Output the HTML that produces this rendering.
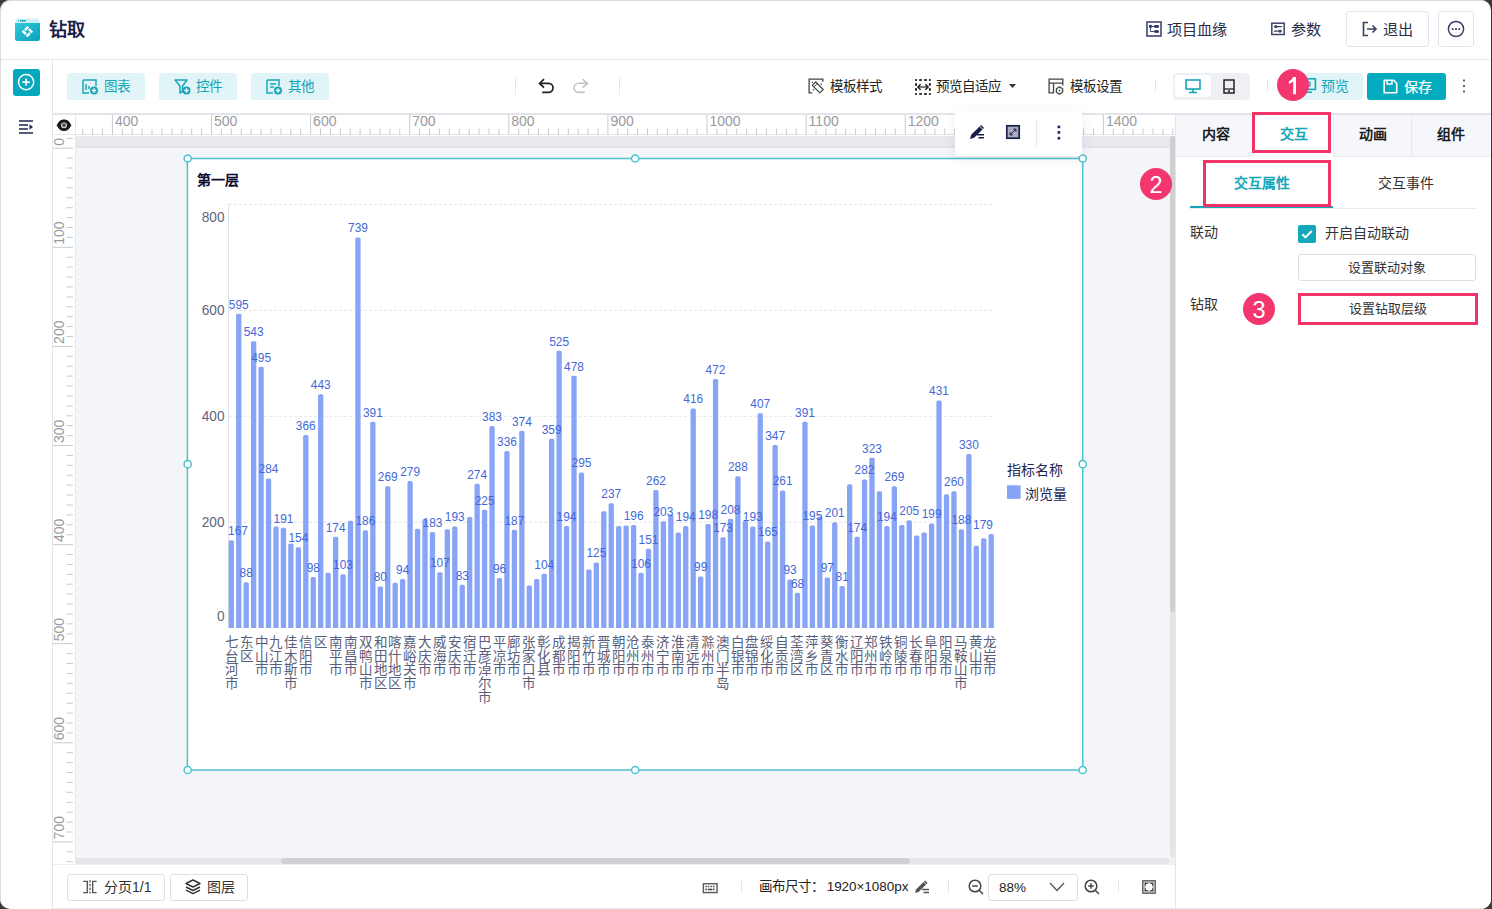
<!DOCTYPE html>
<html lang="zh-CN">
<head>
<meta charset="utf-8">
<style>
*{box-sizing:border-box;margin:0;padding:0}
html,body{width:1492px;height:909px;overflow:hidden;background:#3a3a3a;font-family:"Liberation Sans",sans-serif;color:#333}
.win{position:absolute;left:0;top:0;width:1491px;height:909px;background:#fff;border-radius:10px;overflow:hidden}
.win:after{content:"";position:absolute;left:0;top:0;right:0;bottom:0;border-radius:10px;box-shadow:inset 1px 1px 0 #dcdcdc;pointer-events:none}
.abs{position:absolute}
.hdr{left:0;top:0;width:1491px;height:60px;border-bottom:1px solid #e4e6ee}
.side{left:0;top:60px;width:53px;height:849px;border-right:1px solid #e4e6ee}
.tbtn{position:absolute;top:73px;height:27px;width:78px;background:#e1f4f7;border-radius:3px;color:#10a4b7;font-size:13.5px;line-height:27px}
.tbtn span{position:absolute;left:37px;top:0}
.tbtn svg{position:absolute;left:15px;top:6px}
.tool{position:absolute;top:79px;font-size:13.5px;color:#222;line-height:16px}
.sep{position:absolute;width:1px;background:#e6e7ec}
svg text{font-family:"Liberation Sans",sans-serif}
.yl{font-size:15.5px;fill:#5e6382}
.dl{font-size:12.8px;fill:#4468d8}
.xl{font-size:13.5px;fill:#5a5e7a}
.rl{font-size:14px;fill:#9a9a9e}
.tab{position:absolute;top:113px;height:42px;width:79px;font-size:14px;font-weight:bold;color:#1d1d1d;text-align:center;line-height:42px}
.pink{position:absolute;border:3px solid #f03468}
.badge{position:absolute;width:32px;height:32px;border-radius:50%;background:#f3366e;color:#fff;font-size:23.5px;text-align:center;line-height:34px}
.btn{position:absolute;border:1px solid #dcdfe6;border-radius:3px;background:#fff;font-size:13px;color:#333;text-align:center}
</style>
</head>
<body>
<div class="win">
  <!-- header -->
  <div class="abs hdr">
    <svg class="abs" style="left:15px;top:18px" width="26" height="24" viewBox="0 0 26 24">
      <defs><linearGradient id="lg" x1="0" y1="0" x2="1" y2="1"><stop offset="0" stop-color="#33c8de"/><stop offset="1" stop-color="#0a9fbb"/></linearGradient></defs>
      <rect x="0.5" y="0.5" width="24" height="8" rx="2.5" fill="#cdeff5"/>
      <path d="M0 5.1H25V20.5Q25 23 22.5 23H2.5Q0 23 0 20.5Z" fill="url(#lg)"/>
      <rect x="3" y="2" width="1" height="1.5" fill="#19a9c2"/><rect x="5" y="2" width="6" height="1.5" fill="#19a9c2"/>
      <g fill="#fff" transform="translate(12.4 13.6) rotate(-45)"><rect x="-0.8" y="-4" width="4.8" height="2.4" rx="0.5"/><rect x="1.6" y="-0.8" width="2.4" height="4.8" rx="0.5"/><rect x="-4" y="1.6" width="4.8" height="2.4" rx="0.5"/><rect x="-4" y="-4" width="2.4" height="4.8" rx="0.5"/></g>
    </svg>
    <div class="abs" style="left:49px;top:18.5px;font-size:18px;font-weight:bold;color:#1c1d47;line-height:22px">钻取</div>

    <svg class="abs" style="left:1146px;top:21px" width="16" height="16" viewBox="0 0 16 16"><rect x="1" y="1" width="14" height="14" fill="none" stroke="#4d5275" stroke-width="1.7"/><rect x="3.1" y="3.9" width="2.7" height="2.9" fill="#2a2f5a"/><rect x="8.3" y="4.1" width="4.5" height="2.7" fill="#2a2f5a"/><rect x="8.3" y="9.2" width="4.5" height="2.6" fill="#2a2f5a"/><path d="M5.8 5.4H8.3M4.4 6.8V10.5H8.3" fill="none" stroke="#2a2f5a" stroke-width="0.9"/></svg>
    <div class="abs" style="left:1167px;top:20.5px;font-size:15.2px;color:#2b2d45;line-height:18px">项目血缘</div>
    <svg class="abs" style="left:1271px;top:22px" width="14" height="14" viewBox="0 0 14 14"><rect x="0.8" y="1.2" width="12.4" height="11.3" fill="none" stroke="#3f4466" stroke-width="1.5"/><path d="M2.9 4.6h7.9M2.9 9.1h7.9" stroke="#3f4466" stroke-width="1.3"/><circle cx="4.9" cy="4.6" r="1.6" fill="#3f4466"/><circle cx="9" cy="9.1" r="1.6" fill="#3f4466"/></svg>
    <div class="abs" style="left:1291px;top:20.5px;font-size:15.2px;color:#2b2d45;line-height:18px">参数</div>
    <div class="abs" style="left:1346px;top:11px;width:83px;height:36px;border:1px solid #e2e3ec;border-radius:3px"></div>
    <svg class="abs" style="left:1362px;top:21px" width="16" height="16" viewBox="0 0 16 16"><path d="M6 1.5H1.5v13H6" fill="none" stroke="#3f4363" stroke-width="1.7"/><path d="M5 8h9M10.5 4.5L14 8l-3.5 3.5" fill="none" stroke="#3f4363" stroke-width="1.7"/></svg>
    <div class="abs" style="left:1383px;top:20.5px;font-size:15.2px;color:#2b2d45;line-height:18px">退出</div>
    <div class="abs" style="left:1438px;top:11px;width:36px;height:36px;border:1px solid #e2e3ec;border-radius:3px"></div>
    <svg class="abs" style="left:1447px;top:20px" width="18" height="18" viewBox="0 0 18 18"><circle cx="9" cy="9" r="7.6" fill="none" stroke="#3f4363" stroke-width="1.5"/><rect x="4.8" y="8.2" width="1.8" height="1.8" fill="#3f4363"/><rect x="8.1" y="8.2" width="1.8" height="1.8" fill="#3f4363"/><rect x="11.4" y="8.2" width="1.8" height="1.8" fill="#3f4363"/></svg>
  </div>

  <!-- left sidebar -->
  <div class="abs side"></div>
  <div class="abs" style="left:13px;top:69px;width:27px;height:27px;background:#08a8bc;border-radius:3px"></div>
  <svg class="abs" style="left:13px;top:69px" width="27" height="27" viewBox="0 0 27 27"><circle cx="13.1" cy="13.1" r="7.6" fill="none" stroke="#fff" stroke-width="1.5"/><path d="M13.1 9.4v7.4M9.4 13.1h7.4" stroke="#fff" stroke-width="1.6"/></svg>
  <svg class="abs" style="left:19px;top:120px" width="15" height="14" viewBox="0 0 15 14"><path d="M0 1h14M0 5h9M0 9h9M0 13h14" stroke="#22264f" stroke-width="1.4"/><path d="M10.5 4.2l3.5 2.8l-3.5 2.8z" fill="#22264f"/></svg>

  <!-- toolbar -->
  <div class="tbtn" style="left:67px"><svg width="17" height="16" viewBox="0 0 17 16"><path d="M1 1h13v6M1 1v13h6" fill="none" stroke="#17a6b8" stroke-width="1.5"/><path d="M4 5v6M7 7v3" stroke="#17a6b8" stroke-width="1.5"/><circle cx="12" cy="11.5" r="4" fill="#17a6b8"/><path d="M12 9.3v4.4M9.8 11.5h4.4" stroke="#fff" stroke-width="1.3"/></svg><span>图表</span></div>
  <div class="tbtn" style="left:159px"><svg width="17" height="16" viewBox="0 0 17 16"><path d="M1 1h12l-4.5 6v5.5L6 14V7z" fill="none" stroke="#17a6b8" stroke-width="1.5" stroke-linejoin="round"/><circle cx="12.5" cy="11.5" r="4" fill="#17a6b8"/><path d="M12.5 9.3v4.4M10.3 11.5h4.4" stroke="#fff" stroke-width="1.3"/></svg><span>控件</span></div>
  <div class="tbtn" style="left:251px"><svg width="17" height="16" viewBox="0 0 17 16"><path d="M1 1h12v6M1 1v13h6M4 5h6M4 8h4" fill="none" stroke="#17a6b8" stroke-width="1.5"/><circle cx="12" cy="11.5" r="4" fill="#17a6b8"/><path d="M12 9.3v4.4M9.8 11.5h4.4" stroke="#fff" stroke-width="1.3"/></svg><span>其他</span></div>

  <div class="sep" style="left:515px;top:77px;height:18px"></div>
  <svg class="abs" style="left:536px;top:75px" width="20" height="20" viewBox="0 0 20 20"><path d="M8 4.2L3.6 8.4L8 12.6" fill="none" stroke="#222" stroke-width="1.7"/><path d="M3.8 8.3H12.5A4.55 4.55 0 0 1 12.5 17.4H6.2" fill="none" stroke="#222" stroke-width="1.7"/></svg>
  <svg class="abs" style="left:571px;top:75px" width="20" height="20" viewBox="0 0 20 20"><path d="M11.6 4.2L16.4 8.4L11.6 12.6" fill="none" stroke="#c4c4c4" stroke-width="1.6"/><path d="M16.2 8.3H7.6A4.55 4.55 0 0 0 7.6 17.4H13.9" fill="none" stroke="#c4c4c4" stroke-width="1.6"/></svg>
  <div class="sep" style="left:619px;top:77px;height:18px"></div>

  <svg class="abs" style="left:805px;top:75px" width="22" height="22" viewBox="0 0 22 22"><path d="M17.8 6.8V4.1H4.1v13.7h3.2" fill="none" stroke="#444" stroke-width="1.3"/><path d="M7.3 10.4L10.7 7L18.2 14.5L14.8 17.9Z" fill="none" stroke="#444" stroke-width="1.2" stroke-linejoin="round"/><path d="M8.9 11.9l3.3-3.3" stroke="#444" stroke-width="1"/><circle cx="7.5" cy="7.4" r="0.7" fill="#444"/><circle cx="16.3" cy="9.1" r="0.8" fill="#444"/><circle cx="8.5" cy="14.8" r="0.8" fill="#444"/></svg>
  <div class="tool" style="left:830px">模板样式</div>
  <svg class="abs" style="left:910px;top:75px" width="26" height="24" viewBox="0 0 26 24"><g fill="#222"><rect x="5.1" y="4.1" width="1.9" height="1.8"/><rect x="9.2" y="4.1" width="2.7" height="1.8"/><rect x="14.1" y="4.1" width="2.8" height="1.8"/><rect x="18.9" y="4.1" width="1.9" height="1.8"/><rect x="5.1" y="18.1" width="1.9" height="1.8"/><rect x="9.2" y="18.1" width="2.7" height="1.8"/><rect x="14.1" y="18.1" width="2.8" height="1.8"/><rect x="18.9" y="18.1" width="1.9" height="1.8"/><rect x="5.1" y="8.1" width="1.9" height="2.7"/><rect x="5.1" y="13.1" width="1.9" height="2.7"/><rect x="18.9" y="8.1" width="1.9" height="2.7"/><rect x="18.9" y="13.1" width="1.9" height="2.7"/></g><path d="M8.5 12h9" stroke="#444" stroke-width="1.4"/><path d="M10.6 9.3L8 12l2.6 2.7M15.4 9.3L18 12l-2.6 2.7" fill="none" stroke="#222" stroke-width="1.6"/></svg>
  <div class="tool" style="left:936px">预览自适应</div>
  <svg class="abs" style="left:1009px;top:84px" width="7" height="5" viewBox="0 0 7 5"><path d="M0 0h7L3.5 4z" fill="#333"/></svg>
  <svg class="abs" style="left:1045px;top:75px" width="22" height="22" viewBox="0 0 22 22"><path d="M17.8 10.5V4.1H4.1v13.7h4.4V8.2M4.1 8.2h13.7" fill="none" stroke="#444" stroke-width="1.3"/><path d="M14.5 11.9L17.6 13.7V17.3L14.5 19.1L11.4 17.3V13.7Z" fill="none" stroke="#444" stroke-width="1.3" stroke-linejoin="round"/><circle cx="14.5" cy="15.5" r="0.9" fill="#444"/></svg>
  <div class="tool" style="left:1070px">模板设置</div>
  <div class="sep" style="left:1155px;top:79px;height:13px"></div>

  <div class="abs" style="left:1173px;top:73px;width:77px;height:27px;background:#eef0f4;border-radius:4px"></div>
  <div class="abs" style="left:1175px;top:75px;width:36px;height:22px;background:#fff;border-radius:3px"></div>
  <svg class="abs" style="left:1185px;top:79px" width="16" height="15" viewBox="0 0 16 15"><rect x="1" y="1" width="14" height="9" fill="none" stroke="#17a6b8" stroke-width="1.6"/><path d="M8 10v3M4 13.5h8" stroke="#17a6b8" stroke-width="1.6"/></svg>
  <svg class="abs" style="left:1223px;top:79px" width="12" height="15" viewBox="0 0 12 15"><rect x="1" y="1" width="10" height="13" fill="none" stroke="#222" stroke-width="1.5"/><path d="M1 10h10" stroke="#222" stroke-width="1.3"/><rect x="5" y="11.3" width="2" height="1.5" fill="#222"/></svg>
  <div class="sep" style="left:1267px;top:79px;height:13px"></div>

  <div class="abs" style="left:1290px;top:73px;width:73px;height:27px;background:#e1f4f7;border-radius:3px"></div>
  <svg class="abs" style="left:1300px;top:77px" width="17" height="17" viewBox="0 0 17 17"><rect x="1.8" y="1.8" width="13.6" height="10.6" fill="none" stroke="#17a6b8" stroke-width="1.6"/><rect x="6.4" y="5.3" width="3.6" height="3.6" fill="none" stroke="#17a6b8" stroke-width="1.3"/><path d="M4 15.2h8" stroke="#17a6b8" stroke-width="1.6"/></svg>
  <div class="abs" style="left:1321px;top:78px;font-size:14px;color:#17a6b8;line-height:16px">预览</div>
  <div class="abs" style="left:1367px;top:73px;width:79px;height:27px;background:#03abbe;border-radius:3px"></div>
  <svg class="abs" style="left:1383px;top:79px" width="15" height="15" viewBox="0 0 15 15"><path d="M1.2 1.2h9.5l3 3v9.5H1.2z" fill="none" stroke="#fff" stroke-width="1.6" stroke-linejoin="round"/><path d="M4 1.5v3.5h5V1.5" fill="none" stroke="#fff" stroke-width="1.5"/></svg>
  <div class="abs" style="left:1404px;top:79px;font-size:14px;font-weight:500;color:#fff;line-height:16px;-webkit-text-stroke:0.25px #fff">保存</div>
  <svg class="abs" style="left:1462px;top:78px" width="4" height="16" viewBox="0 0 4 16"><rect x="1.1" y="1.6" width="1.8" height="1.8" fill="#444"/><rect x="1.1" y="7.1" width="1.8" height="1.8" fill="#444"/><rect x="1.1" y="12.6" width="1.8" height="1.8" fill="#444"/></svg>
  <div class="badge" style="left:1277px;top:69px"><svg width="32" height="32" viewBox="0 0 32 32" style="position:absolute;left:0;top:0"><path d="M16.2 8.1H19V25.2H16.2V12.6Q14.4 14.1 11.9 14.9V12.3Q14.9 11.1 16.2 8.1Z" fill="#fff"/></svg></div>

  <!-- ruler + canvas area -->
  <div class="abs" style="left:53px;top:113px;width:1438px;height:2px;background:#e3e4ea"></div>
  <div class="abs" style="left:53px;top:115px;width:1122px;height:20px;background:#fff;border-bottom:1px solid #e6e7ec"></div>
  <div class="abs" style="left:53px;top:135px;width:23px;height:728px;background:#fff;border-right:1px solid #e6e7ec"></div>
  <div class="abs" style="left:75px;top:115px;width:1px;height:20px;background:#e6e7ec"></div>
  <div class="abs" style="left:76px;top:136px;width:1094px;height:722px;background:#f4f5f9"></div>
  <div class="abs" style="left:76px;top:136px;width:1094px;height:12px;background:linear-gradient(#e9eaee,#e9eaee 70%,#e2e3e7)"></div>
  <div class="abs" style="left:75px;top:136px;width:1px;height:1px"></div>
  <svg class="abs" style="left:56px;top:118.5px" width="16" height="13" viewBox="0 0 16 13"><path d="M0.8 6.3C3 1.4 5.5 0.6 8 0.6S13 1.4 15.2 6.3C13 11.2 10.5 12 8 12S3 11.2 0.8 6.3z" fill="#1a1a1a"/><circle cx="8" cy="6.3" r="2.9" fill="#fff"/><circle cx="8" cy="6.3" r="2.1" fill="#1a1a1a"/><circle cx="8" cy="6.3" r="1.6" fill="#bbb"/><circle cx="8" cy="6.3" r="1.0" fill="#1a1a1a"/></svg>
  <svg class="abs" style="left:0;top:0" width="1492" height="909"><line x1="82.7" y1="128.5" x2="82.7" y2="135" stroke="#c9cacf" stroke-width="1"/>
<line x1="92.6" y1="128.5" x2="92.6" y2="135" stroke="#c9cacf" stroke-width="1"/>
<line x1="102.5" y1="128.5" x2="102.5" y2="135" stroke="#c9cacf" stroke-width="1"/>
<line x1="112.4" y1="115" x2="112.4" y2="135" stroke="#c9cacf" stroke-width="1"/>
<text x="114.9" y="126" class="rl">400</text>
<line x1="122.3" y1="128.5" x2="122.3" y2="135" stroke="#c9cacf" stroke-width="1"/>
<line x1="132.2" y1="128.5" x2="132.2" y2="135" stroke="#c9cacf" stroke-width="1"/>
<line x1="142.1" y1="128.5" x2="142.1" y2="135" stroke="#c9cacf" stroke-width="1"/>
<line x1="152.0" y1="128.5" x2="152.0" y2="135" stroke="#c9cacf" stroke-width="1"/>
<line x1="161.9" y1="128.5" x2="161.9" y2="135" stroke="#c9cacf" stroke-width="1"/>
<line x1="171.9" y1="128.5" x2="171.9" y2="135" stroke="#c9cacf" stroke-width="1"/>
<line x1="181.8" y1="128.5" x2="181.8" y2="135" stroke="#c9cacf" stroke-width="1"/>
<line x1="191.7" y1="128.5" x2="191.7" y2="135" stroke="#c9cacf" stroke-width="1"/>
<line x1="201.6" y1="128.5" x2="201.6" y2="135" stroke="#c9cacf" stroke-width="1"/>
<line x1="211.5" y1="115" x2="211.5" y2="135" stroke="#c9cacf" stroke-width="1"/>
<text x="214.0" y="126" class="rl">500</text>
<line x1="221.4" y1="128.5" x2="221.4" y2="135" stroke="#c9cacf" stroke-width="1"/>
<line x1="231.3" y1="128.5" x2="231.3" y2="135" stroke="#c9cacf" stroke-width="1"/>
<line x1="241.2" y1="128.5" x2="241.2" y2="135" stroke="#c9cacf" stroke-width="1"/>
<line x1="251.1" y1="128.5" x2="251.1" y2="135" stroke="#c9cacf" stroke-width="1"/>
<line x1="261.1" y1="128.5" x2="261.1" y2="135" stroke="#c9cacf" stroke-width="1"/>
<line x1="271.0" y1="128.5" x2="271.0" y2="135" stroke="#c9cacf" stroke-width="1"/>
<line x1="280.9" y1="128.5" x2="280.9" y2="135" stroke="#c9cacf" stroke-width="1"/>
<line x1="290.8" y1="128.5" x2="290.8" y2="135" stroke="#c9cacf" stroke-width="1"/>
<line x1="300.7" y1="128.5" x2="300.7" y2="135" stroke="#c9cacf" stroke-width="1"/>
<line x1="310.6" y1="115" x2="310.6" y2="135" stroke="#c9cacf" stroke-width="1"/>
<text x="313.1" y="126" class="rl">600</text>
<line x1="320.5" y1="128.5" x2="320.5" y2="135" stroke="#c9cacf" stroke-width="1"/>
<line x1="330.4" y1="128.5" x2="330.4" y2="135" stroke="#c9cacf" stroke-width="1"/>
<line x1="340.3" y1="128.5" x2="340.3" y2="135" stroke="#c9cacf" stroke-width="1"/>
<line x1="350.2" y1="128.5" x2="350.2" y2="135" stroke="#c9cacf" stroke-width="1"/>
<line x1="360.1" y1="128.5" x2="360.1" y2="135" stroke="#c9cacf" stroke-width="1"/>
<line x1="370.1" y1="128.5" x2="370.1" y2="135" stroke="#c9cacf" stroke-width="1"/>
<line x1="380.0" y1="128.5" x2="380.0" y2="135" stroke="#c9cacf" stroke-width="1"/>
<line x1="389.9" y1="128.5" x2="389.9" y2="135" stroke="#c9cacf" stroke-width="1"/>
<line x1="399.8" y1="128.5" x2="399.8" y2="135" stroke="#c9cacf" stroke-width="1"/>
<line x1="409.7" y1="115" x2="409.7" y2="135" stroke="#c9cacf" stroke-width="1"/>
<text x="412.2" y="126" class="rl">700</text>
<line x1="419.6" y1="128.5" x2="419.6" y2="135" stroke="#c9cacf" stroke-width="1"/>
<line x1="429.5" y1="128.5" x2="429.5" y2="135" stroke="#c9cacf" stroke-width="1"/>
<line x1="439.4" y1="128.5" x2="439.4" y2="135" stroke="#c9cacf" stroke-width="1"/>
<line x1="449.3" y1="128.5" x2="449.3" y2="135" stroke="#c9cacf" stroke-width="1"/>
<line x1="459.2" y1="128.5" x2="459.2" y2="135" stroke="#c9cacf" stroke-width="1"/>
<line x1="469.2" y1="128.5" x2="469.2" y2="135" stroke="#c9cacf" stroke-width="1"/>
<line x1="479.1" y1="128.5" x2="479.1" y2="135" stroke="#c9cacf" stroke-width="1"/>
<line x1="489.0" y1="128.5" x2="489.0" y2="135" stroke="#c9cacf" stroke-width="1"/>
<line x1="498.9" y1="128.5" x2="498.9" y2="135" stroke="#c9cacf" stroke-width="1"/>
<line x1="508.8" y1="115" x2="508.8" y2="135" stroke="#c9cacf" stroke-width="1"/>
<text x="511.3" y="126" class="rl">800</text>
<line x1="518.7" y1="128.5" x2="518.7" y2="135" stroke="#c9cacf" stroke-width="1"/>
<line x1="528.6" y1="128.5" x2="528.6" y2="135" stroke="#c9cacf" stroke-width="1"/>
<line x1="538.5" y1="128.5" x2="538.5" y2="135" stroke="#c9cacf" stroke-width="1"/>
<line x1="548.4" y1="128.5" x2="548.4" y2="135" stroke="#c9cacf" stroke-width="1"/>
<line x1="558.4" y1="128.5" x2="558.4" y2="135" stroke="#c9cacf" stroke-width="1"/>
<line x1="568.3" y1="128.5" x2="568.3" y2="135" stroke="#c9cacf" stroke-width="1"/>
<line x1="578.2" y1="128.5" x2="578.2" y2="135" stroke="#c9cacf" stroke-width="1"/>
<line x1="588.1" y1="128.5" x2="588.1" y2="135" stroke="#c9cacf" stroke-width="1"/>
<line x1="598.0" y1="128.5" x2="598.0" y2="135" stroke="#c9cacf" stroke-width="1"/>
<line x1="607.9" y1="115" x2="607.9" y2="135" stroke="#c9cacf" stroke-width="1"/>
<text x="610.4" y="126" class="rl">900</text>
<line x1="617.8" y1="128.5" x2="617.8" y2="135" stroke="#c9cacf" stroke-width="1"/>
<line x1="627.7" y1="128.5" x2="627.7" y2="135" stroke="#c9cacf" stroke-width="1"/>
<line x1="637.6" y1="128.5" x2="637.6" y2="135" stroke="#c9cacf" stroke-width="1"/>
<line x1="647.5" y1="128.5" x2="647.5" y2="135" stroke="#c9cacf" stroke-width="1"/>
<line x1="657.4" y1="128.5" x2="657.4" y2="135" stroke="#c9cacf" stroke-width="1"/>
<line x1="667.4" y1="128.5" x2="667.4" y2="135" stroke="#c9cacf" stroke-width="1"/>
<line x1="677.3" y1="128.5" x2="677.3" y2="135" stroke="#c9cacf" stroke-width="1"/>
<line x1="687.2" y1="128.5" x2="687.2" y2="135" stroke="#c9cacf" stroke-width="1"/>
<line x1="697.1" y1="128.5" x2="697.1" y2="135" stroke="#c9cacf" stroke-width="1"/>
<line x1="707.0" y1="115" x2="707.0" y2="135" stroke="#c9cacf" stroke-width="1"/>
<text x="709.5" y="126" class="rl">1000</text>
<line x1="716.9" y1="128.5" x2="716.9" y2="135" stroke="#c9cacf" stroke-width="1"/>
<line x1="726.8" y1="128.5" x2="726.8" y2="135" stroke="#c9cacf" stroke-width="1"/>
<line x1="736.7" y1="128.5" x2="736.7" y2="135" stroke="#c9cacf" stroke-width="1"/>
<line x1="746.6" y1="128.5" x2="746.6" y2="135" stroke="#c9cacf" stroke-width="1"/>
<line x1="756.5" y1="128.5" x2="756.5" y2="135" stroke="#c9cacf" stroke-width="1"/>
<line x1="766.5" y1="128.5" x2="766.5" y2="135" stroke="#c9cacf" stroke-width="1"/>
<line x1="776.4" y1="128.5" x2="776.4" y2="135" stroke="#c9cacf" stroke-width="1"/>
<line x1="786.3" y1="128.5" x2="786.3" y2="135" stroke="#c9cacf" stroke-width="1"/>
<line x1="796.2" y1="128.5" x2="796.2" y2="135" stroke="#c9cacf" stroke-width="1"/>
<line x1="806.1" y1="115" x2="806.1" y2="135" stroke="#c9cacf" stroke-width="1"/>
<text x="808.6" y="126" class="rl">1100</text>
<line x1="816.0" y1="128.5" x2="816.0" y2="135" stroke="#c9cacf" stroke-width="1"/>
<line x1="825.9" y1="128.5" x2="825.9" y2="135" stroke="#c9cacf" stroke-width="1"/>
<line x1="835.8" y1="128.5" x2="835.8" y2="135" stroke="#c9cacf" stroke-width="1"/>
<line x1="845.7" y1="128.5" x2="845.7" y2="135" stroke="#c9cacf" stroke-width="1"/>
<line x1="855.6" y1="128.5" x2="855.6" y2="135" stroke="#c9cacf" stroke-width="1"/>
<line x1="865.6" y1="128.5" x2="865.6" y2="135" stroke="#c9cacf" stroke-width="1"/>
<line x1="875.5" y1="128.5" x2="875.5" y2="135" stroke="#c9cacf" stroke-width="1"/>
<line x1="885.4" y1="128.5" x2="885.4" y2="135" stroke="#c9cacf" stroke-width="1"/>
<line x1="895.3" y1="128.5" x2="895.3" y2="135" stroke="#c9cacf" stroke-width="1"/>
<line x1="905.2" y1="115" x2="905.2" y2="135" stroke="#c9cacf" stroke-width="1"/>
<text x="907.7" y="126" class="rl">1200</text>
<line x1="915.1" y1="128.5" x2="915.1" y2="135" stroke="#c9cacf" stroke-width="1"/>
<line x1="925.0" y1="128.5" x2="925.0" y2="135" stroke="#c9cacf" stroke-width="1"/>
<line x1="934.9" y1="128.5" x2="934.9" y2="135" stroke="#c9cacf" stroke-width="1"/>
<line x1="944.8" y1="128.5" x2="944.8" y2="135" stroke="#c9cacf" stroke-width="1"/>
<line x1="954.8" y1="128.5" x2="954.8" y2="135" stroke="#c9cacf" stroke-width="1"/>
<line x1="964.7" y1="128.5" x2="964.7" y2="135" stroke="#c9cacf" stroke-width="1"/>
<line x1="974.6" y1="128.5" x2="974.6" y2="135" stroke="#c9cacf" stroke-width="1"/>
<line x1="984.5" y1="128.5" x2="984.5" y2="135" stroke="#c9cacf" stroke-width="1"/>
<line x1="994.4" y1="128.5" x2="994.4" y2="135" stroke="#c9cacf" stroke-width="1"/>
<line x1="1004.3" y1="115" x2="1004.3" y2="135" stroke="#c9cacf" stroke-width="1"/>
<text x="1006.8" y="126" class="rl">1300</text>
<line x1="1014.2" y1="128.5" x2="1014.2" y2="135" stroke="#c9cacf" stroke-width="1"/>
<line x1="1024.1" y1="128.5" x2="1024.1" y2="135" stroke="#c9cacf" stroke-width="1"/>
<line x1="1034.0" y1="128.5" x2="1034.0" y2="135" stroke="#c9cacf" stroke-width="1"/>
<line x1="1043.9" y1="128.5" x2="1043.9" y2="135" stroke="#c9cacf" stroke-width="1"/>
<line x1="1053.9" y1="128.5" x2="1053.9" y2="135" stroke="#c9cacf" stroke-width="1"/>
<line x1="1063.8" y1="128.5" x2="1063.8" y2="135" stroke="#c9cacf" stroke-width="1"/>
<line x1="1073.7" y1="128.5" x2="1073.7" y2="135" stroke="#c9cacf" stroke-width="1"/>
<line x1="1083.6" y1="128.5" x2="1083.6" y2="135" stroke="#c9cacf" stroke-width="1"/>
<line x1="1093.5" y1="128.5" x2="1093.5" y2="135" stroke="#c9cacf" stroke-width="1"/>
<line x1="1103.4" y1="115" x2="1103.4" y2="135" stroke="#c9cacf" stroke-width="1"/>
<text x="1105.9" y="126" class="rl">1400</text>
<line x1="1113.3" y1="128.5" x2="1113.3" y2="135" stroke="#c9cacf" stroke-width="1"/>
<line x1="1123.2" y1="128.5" x2="1123.2" y2="135" stroke="#c9cacf" stroke-width="1"/>
<line x1="1133.1" y1="128.5" x2="1133.1" y2="135" stroke="#c9cacf" stroke-width="1"/>
<line x1="1143.0" y1="128.5" x2="1143.0" y2="135" stroke="#c9cacf" stroke-width="1"/>
<line x1="1153.0" y1="128.5" x2="1153.0" y2="135" stroke="#c9cacf" stroke-width="1"/>
<line x1="1162.9" y1="128.5" x2="1162.9" y2="135" stroke="#c9cacf" stroke-width="1"/>
<line x1="1172.8" y1="128.5" x2="1172.8" y2="135" stroke="#c9cacf" stroke-width="1"/>
<line x1="66.5" y1="138.3" x2="73" y2="138.3" stroke="#c9cacf" stroke-width="1"/>
<line x1="53" y1="148.2" x2="73" y2="148.2" stroke="#c9cacf" stroke-width="1"/>
<text transform="translate(63.5 145.7) rotate(-90)" class="rl">0</text>
<line x1="66.5" y1="158.1" x2="73" y2="158.1" stroke="#c9cacf" stroke-width="1"/>
<line x1="66.5" y1="168.0" x2="73" y2="168.0" stroke="#c9cacf" stroke-width="1"/>
<line x1="66.5" y1="177.9" x2="73" y2="177.9" stroke="#c9cacf" stroke-width="1"/>
<line x1="66.5" y1="187.8" x2="73" y2="187.8" stroke="#c9cacf" stroke-width="1"/>
<line x1="66.5" y1="197.8" x2="73" y2="197.8" stroke="#c9cacf" stroke-width="1"/>
<line x1="66.5" y1="207.7" x2="73" y2="207.7" stroke="#c9cacf" stroke-width="1"/>
<line x1="66.5" y1="217.6" x2="73" y2="217.6" stroke="#c9cacf" stroke-width="1"/>
<line x1="66.5" y1="227.5" x2="73" y2="227.5" stroke="#c9cacf" stroke-width="1"/>
<line x1="66.5" y1="237.4" x2="73" y2="237.4" stroke="#c9cacf" stroke-width="1"/>
<line x1="53" y1="247.3" x2="73" y2="247.3" stroke="#c9cacf" stroke-width="1"/>
<text transform="translate(63.5 244.8) rotate(-90)" class="rl">100</text>
<line x1="66.5" y1="257.2" x2="73" y2="257.2" stroke="#c9cacf" stroke-width="1"/>
<line x1="66.5" y1="267.1" x2="73" y2="267.1" stroke="#c9cacf" stroke-width="1"/>
<line x1="66.5" y1="277.0" x2="73" y2="277.0" stroke="#c9cacf" stroke-width="1"/>
<line x1="66.5" y1="286.9" x2="73" y2="286.9" stroke="#c9cacf" stroke-width="1"/>
<line x1="66.5" y1="296.9" x2="73" y2="296.9" stroke="#c9cacf" stroke-width="1"/>
<line x1="66.5" y1="306.8" x2="73" y2="306.8" stroke="#c9cacf" stroke-width="1"/>
<line x1="66.5" y1="316.7" x2="73" y2="316.7" stroke="#c9cacf" stroke-width="1"/>
<line x1="66.5" y1="326.6" x2="73" y2="326.6" stroke="#c9cacf" stroke-width="1"/>
<line x1="66.5" y1="336.5" x2="73" y2="336.5" stroke="#c9cacf" stroke-width="1"/>
<line x1="53" y1="346.4" x2="73" y2="346.4" stroke="#c9cacf" stroke-width="1"/>
<text transform="translate(63.5 343.9) rotate(-90)" class="rl">200</text>
<line x1="66.5" y1="356.3" x2="73" y2="356.3" stroke="#c9cacf" stroke-width="1"/>
<line x1="66.5" y1="366.2" x2="73" y2="366.2" stroke="#c9cacf" stroke-width="1"/>
<line x1="66.5" y1="376.1" x2="73" y2="376.1" stroke="#c9cacf" stroke-width="1"/>
<line x1="66.5" y1="386.0" x2="73" y2="386.0" stroke="#c9cacf" stroke-width="1"/>
<line x1="66.5" y1="395.9" x2="73" y2="395.9" stroke="#c9cacf" stroke-width="1"/>
<line x1="66.5" y1="405.9" x2="73" y2="405.9" stroke="#c9cacf" stroke-width="1"/>
<line x1="66.5" y1="415.8" x2="73" y2="415.8" stroke="#c9cacf" stroke-width="1"/>
<line x1="66.5" y1="425.7" x2="73" y2="425.7" stroke="#c9cacf" stroke-width="1"/>
<line x1="66.5" y1="435.6" x2="73" y2="435.6" stroke="#c9cacf" stroke-width="1"/>
<line x1="53" y1="445.5" x2="73" y2="445.5" stroke="#c9cacf" stroke-width="1"/>
<text transform="translate(63.5 443.0) rotate(-90)" class="rl">300</text>
<line x1="66.5" y1="455.4" x2="73" y2="455.4" stroke="#c9cacf" stroke-width="1"/>
<line x1="66.5" y1="465.3" x2="73" y2="465.3" stroke="#c9cacf" stroke-width="1"/>
<line x1="66.5" y1="475.2" x2="73" y2="475.2" stroke="#c9cacf" stroke-width="1"/>
<line x1="66.5" y1="485.1" x2="73" y2="485.1" stroke="#c9cacf" stroke-width="1"/>
<line x1="66.5" y1="495.1" x2="73" y2="495.1" stroke="#c9cacf" stroke-width="1"/>
<line x1="66.5" y1="505.0" x2="73" y2="505.0" stroke="#c9cacf" stroke-width="1"/>
<line x1="66.5" y1="514.9" x2="73" y2="514.9" stroke="#c9cacf" stroke-width="1"/>
<line x1="66.5" y1="524.8" x2="73" y2="524.8" stroke="#c9cacf" stroke-width="1"/>
<line x1="66.5" y1="534.7" x2="73" y2="534.7" stroke="#c9cacf" stroke-width="1"/>
<line x1="53" y1="544.6" x2="73" y2="544.6" stroke="#c9cacf" stroke-width="1"/>
<text transform="translate(63.5 542.1) rotate(-90)" class="rl">400</text>
<line x1="66.5" y1="554.5" x2="73" y2="554.5" stroke="#c9cacf" stroke-width="1"/>
<line x1="66.5" y1="564.4" x2="73" y2="564.4" stroke="#c9cacf" stroke-width="1"/>
<line x1="66.5" y1="574.3" x2="73" y2="574.3" stroke="#c9cacf" stroke-width="1"/>
<line x1="66.5" y1="584.2" x2="73" y2="584.2" stroke="#c9cacf" stroke-width="1"/>
<line x1="66.5" y1="594.1" x2="73" y2="594.1" stroke="#c9cacf" stroke-width="1"/>
<line x1="66.5" y1="604.1" x2="73" y2="604.1" stroke="#c9cacf" stroke-width="1"/>
<line x1="66.5" y1="614.0" x2="73" y2="614.0" stroke="#c9cacf" stroke-width="1"/>
<line x1="66.5" y1="623.9" x2="73" y2="623.9" stroke="#c9cacf" stroke-width="1"/>
<line x1="66.5" y1="633.8" x2="73" y2="633.8" stroke="#c9cacf" stroke-width="1"/>
<line x1="53" y1="643.7" x2="73" y2="643.7" stroke="#c9cacf" stroke-width="1"/>
<text transform="translate(63.5 641.2) rotate(-90)" class="rl">500</text>
<line x1="66.5" y1="653.6" x2="73" y2="653.6" stroke="#c9cacf" stroke-width="1"/>
<line x1="66.5" y1="663.5" x2="73" y2="663.5" stroke="#c9cacf" stroke-width="1"/>
<line x1="66.5" y1="673.4" x2="73" y2="673.4" stroke="#c9cacf" stroke-width="1"/>
<line x1="66.5" y1="683.3" x2="73" y2="683.3" stroke="#c9cacf" stroke-width="1"/>
<line x1="66.5" y1="693.2" x2="73" y2="693.2" stroke="#c9cacf" stroke-width="1"/>
<line x1="66.5" y1="703.2" x2="73" y2="703.2" stroke="#c9cacf" stroke-width="1"/>
<line x1="66.5" y1="713.1" x2="73" y2="713.1" stroke="#c9cacf" stroke-width="1"/>
<line x1="66.5" y1="723.0" x2="73" y2="723.0" stroke="#c9cacf" stroke-width="1"/>
<line x1="66.5" y1="732.9" x2="73" y2="732.9" stroke="#c9cacf" stroke-width="1"/>
<line x1="53" y1="742.8" x2="73" y2="742.8" stroke="#c9cacf" stroke-width="1"/>
<text transform="translate(63.5 740.3) rotate(-90)" class="rl">600</text>
<line x1="66.5" y1="752.7" x2="73" y2="752.7" stroke="#c9cacf" stroke-width="1"/>
<line x1="66.5" y1="762.6" x2="73" y2="762.6" stroke="#c9cacf" stroke-width="1"/>
<line x1="66.5" y1="772.5" x2="73" y2="772.5" stroke="#c9cacf" stroke-width="1"/>
<line x1="66.5" y1="782.4" x2="73" y2="782.4" stroke="#c9cacf" stroke-width="1"/>
<line x1="66.5" y1="792.3" x2="73" y2="792.3" stroke="#c9cacf" stroke-width="1"/>
<line x1="66.5" y1="802.3" x2="73" y2="802.3" stroke="#c9cacf" stroke-width="1"/>
<line x1="66.5" y1="812.2" x2="73" y2="812.2" stroke="#c9cacf" stroke-width="1"/>
<line x1="66.5" y1="822.1" x2="73" y2="822.1" stroke="#c9cacf" stroke-width="1"/>
<line x1="66.5" y1="832.0" x2="73" y2="832.0" stroke="#c9cacf" stroke-width="1"/>
<line x1="53" y1="841.9" x2="73" y2="841.9" stroke="#c9cacf" stroke-width="1"/>
<text transform="translate(63.5 839.4) rotate(-90)" class="rl">700</text>
<line x1="66.5" y1="851.8" x2="73" y2="851.8" stroke="#c9cacf" stroke-width="1"/>
<line x1="66.5" y1="861.7" x2="73" y2="861.7" stroke="#c9cacf" stroke-width="1"/></svg>

  <!-- component box -->
  <div class="abs" style="left:188px;top:158px;width:895px;height:612px;background:#fff"></div>
  <svg class="abs" style="left:0;top:0" width="1492" height="909">
<line x1="229" y1="522.2" x2="995" y2="522.2" stroke="#e3e4ea" stroke-width="1" stroke-dasharray="3 2"/>
<line x1="229" y1="416.3" x2="995" y2="416.3" stroke="#e3e4ea" stroke-width="1" stroke-dasharray="3 2"/>
<line x1="229" y1="310.4" x2="995" y2="310.4" stroke="#e3e4ea" stroke-width="1" stroke-dasharray="3 2"/>
<line x1="229" y1="204.4" x2="995" y2="204.4" stroke="#e3e4ea" stroke-width="1" stroke-dasharray="3 2"/>
<line x1="228.5" y1="204" x2="228.5" y2="628" stroke="#e3e4ea" stroke-width="1"/>
<text transform="translate(224.5 222.0) scale(0.88 1)" text-anchor="end" class="yl">800</text>
<text transform="translate(224.5 315.2) scale(0.88 1)" text-anchor="end" class="yl">600</text>
<text transform="translate(224.5 421.2) scale(0.88 1)" text-anchor="end" class="yl">400</text>
<text transform="translate(224.5 527.2) scale(0.88 1)" text-anchor="end" class="yl">200</text>
<text transform="translate(224.5 621.2) scale(0.88 1)" text-anchor="end" class="yl">0</text>
<path d="M228.65 628.0 V541.97 Q228.65 540.37 230.25 540.37 H232.35 Q233.95 540.37 233.95 541.97 V628.0 Z" fill="#87a4f6"/>
<path d="M236.10 628.0 V315.35 Q236.10 313.75 237.70 313.75 H239.80 Q241.40 313.75 241.40 315.35 V628.0 Z" fill="#87a4f6"/>
<path d="M243.55 628.0 V583.80 Q243.55 582.20 245.15 582.20 H247.25 Q248.85 582.20 248.85 583.80 V628.0 Z" fill="#87a4f6"/>
<path d="M251.00 628.0 V342.88 Q251.00 341.28 252.60 341.28 H254.70 Q256.30 341.28 256.30 342.88 V628.0 Z" fill="#87a4f6"/>
<path d="M258.45 628.0 V368.30 Q258.45 366.70 260.05 366.70 H262.15 Q263.75 366.70 263.75 368.30 V628.0 Z" fill="#87a4f6"/>
<path d="M265.90 628.0 V480.02 Q265.90 478.42 267.50 478.42 H269.60 Q271.20 478.42 271.20 480.02 V628.0 Z" fill="#87a4f6"/>
<path d="M273.35 628.0 V528.21 Q273.35 526.61 274.95 526.61 H277.05 Q278.65 526.61 278.65 528.21 V628.0 Z" fill="#87a4f6"/>
<path d="M280.80 628.0 V529.27 Q280.80 527.67 282.40 527.67 H284.50 Q286.10 527.67 286.10 529.27 V628.0 Z" fill="#87a4f6"/>
<path d="M288.25 628.0 V545.15 Q288.25 543.55 289.85 543.55 H291.95 Q293.55 543.55 293.55 545.15 V628.0 Z" fill="#87a4f6"/>
<path d="M295.70 628.0 V548.86 Q295.70 547.26 297.30 547.26 H299.40 Q301.00 547.26 301.00 548.86 V628.0 Z" fill="#87a4f6"/>
<path d="M303.15 628.0 V436.60 Q303.15 435.00 304.75 435.00 H306.85 Q308.45 435.00 308.45 436.60 V628.0 Z" fill="#87a4f6"/>
<path d="M310.60 628.0 V578.51 Q310.60 576.91 312.20 576.91 H314.30 Q315.90 576.91 315.90 578.51 V628.0 Z" fill="#87a4f6"/>
<path d="M318.05 628.0 V395.83 Q318.05 394.23 319.65 394.23 H321.75 Q323.35 394.23 323.35 395.83 V628.0 Z" fill="#87a4f6"/>
<path d="M325.50 628.0 V574.27 Q325.50 572.67 327.10 572.67 H329.20 Q330.80 572.67 330.80 574.27 V628.0 Z" fill="#87a4f6"/>
<path d="M332.95 628.0 V538.27 Q332.95 536.67 334.55 536.67 H336.65 Q338.25 536.67 338.25 538.27 V628.0 Z" fill="#87a4f6"/>
<path d="M340.40 628.0 V575.86 Q340.40 574.26 342.00 574.26 H344.10 Q345.70 574.26 345.70 575.86 V628.0 Z" fill="#87a4f6"/>
<path d="M347.85 628.0 V522.38 Q347.85 520.78 349.45 520.78 H351.55 Q353.15 520.78 353.15 522.38 V628.0 Z" fill="#87a4f6"/>
<path d="M355.30 628.0 V239.10 Q355.30 237.50 356.90 237.50 H359.00 Q360.60 237.50 360.60 239.10 V628.0 Z" fill="#87a4f6"/>
<path d="M362.75 628.0 V531.91 Q362.75 530.31 364.35 530.31 H366.45 Q368.05 530.31 368.05 531.91 V628.0 Z" fill="#87a4f6"/>
<path d="M370.20 628.0 V423.37 Q370.20 421.77 371.80 421.77 H373.90 Q375.50 421.77 375.50 423.37 V628.0 Z" fill="#87a4f6"/>
<path d="M377.65 628.0 V588.04 Q377.65 586.44 379.25 586.44 H381.35 Q382.95 586.44 382.95 588.04 V628.0 Z" fill="#87a4f6"/>
<path d="M385.10 628.0 V487.96 Q385.10 486.36 386.70 486.36 H388.80 Q390.40 486.36 390.40 487.96 V628.0 Z" fill="#87a4f6"/>
<path d="M392.55 628.0 V584.33 Q392.55 582.73 394.15 582.73 H396.25 Q397.85 582.73 397.85 584.33 V628.0 Z" fill="#87a4f6"/>
<path d="M400.00 628.0 V580.63 Q400.00 579.03 401.60 579.03 H403.70 Q405.30 579.03 405.30 580.63 V628.0 Z" fill="#87a4f6"/>
<path d="M407.45 628.0 V482.67 Q407.45 481.07 409.05 481.07 H411.15 Q412.75 481.07 412.75 482.67 V628.0 Z" fill="#87a4f6"/>
<path d="M414.90 628.0 V530.32 Q414.90 528.72 416.50 528.72 H418.60 Q420.20 528.72 420.20 530.32 V628.0 Z" fill="#87a4f6"/>
<path d="M422.35 628.0 V520.79 Q422.35 519.19 423.95 519.19 H426.05 Q427.65 519.19 427.65 520.79 V628.0 Z" fill="#87a4f6"/>
<path d="M429.80 628.0 V533.50 Q429.80 531.90 431.40 531.90 H433.50 Q435.10 531.90 435.10 533.50 V628.0 Z" fill="#87a4f6"/>
<path d="M437.25 628.0 V573.74 Q437.25 572.14 438.85 572.14 H440.95 Q442.55 572.14 442.55 573.74 V628.0 Z" fill="#87a4f6"/>
<path d="M444.70 628.0 V530.85 Q444.70 529.25 446.30 529.25 H448.40 Q450.00 529.25 450.00 530.85 V628.0 Z" fill="#87a4f6"/>
<path d="M452.15 628.0 V528.21 Q452.15 526.61 453.75 526.61 H455.85 Q457.45 526.61 457.45 528.21 V628.0 Z" fill="#87a4f6"/>
<path d="M459.60 628.0 V586.45 Q459.60 584.85 461.20 584.85 H463.30 Q464.90 584.85 464.90 586.45 V628.0 Z" fill="#87a4f6"/>
<path d="M467.05 628.0 V518.68 Q467.05 517.08 468.65 517.08 H470.75 Q472.35 517.08 472.35 518.68 V628.0 Z" fill="#87a4f6"/>
<path d="M474.50 628.0 V485.32 Q474.50 483.72 476.10 483.72 H478.20 Q479.80 483.72 479.80 485.32 V628.0 Z" fill="#87a4f6"/>
<path d="M481.95 628.0 V511.26 Q481.95 509.66 483.55 509.66 H485.65 Q487.25 509.66 487.25 511.26 V628.0 Z" fill="#87a4f6"/>
<path d="M489.40 628.0 V427.60 Q489.40 426.00 491.00 426.00 H493.10 Q494.70 426.00 494.70 427.60 V628.0 Z" fill="#87a4f6"/>
<path d="M496.85 628.0 V579.57 Q496.85 577.97 498.45 577.97 H500.55 Q502.15 577.97 502.15 579.57 V628.0 Z" fill="#87a4f6"/>
<path d="M504.30 628.0 V452.49 Q504.30 450.89 505.90 450.89 H508.00 Q509.60 450.89 509.60 452.49 V628.0 Z" fill="#87a4f6"/>
<path d="M511.75 628.0 V531.38 Q511.75 529.78 513.35 529.78 H515.45 Q517.05 529.78 517.05 531.38 V628.0 Z" fill="#87a4f6"/>
<path d="M519.20 628.0 V432.37 Q519.20 430.77 520.80 430.77 H522.90 Q524.50 430.77 524.50 432.37 V628.0 Z" fill="#87a4f6"/>
<path d="M526.65 628.0 V586.98 Q526.65 585.38 528.25 585.38 H530.35 Q531.95 585.38 531.95 586.98 V628.0 Z" fill="#87a4f6"/>
<path d="M534.10 628.0 V580.63 Q534.10 579.03 535.70 579.03 H537.80 Q539.40 579.03 539.40 580.63 V628.0 Z" fill="#87a4f6"/>
<path d="M541.55 628.0 V575.33 Q541.55 573.73 543.15 573.73 H545.25 Q546.85 573.73 546.85 575.33 V628.0 Z" fill="#87a4f6"/>
<path d="M549.00 628.0 V440.31 Q549.00 438.71 550.60 438.71 H552.70 Q554.30 438.71 554.30 440.31 V628.0 Z" fill="#87a4f6"/>
<path d="M556.45 628.0 V352.41 Q556.45 350.81 558.05 350.81 H560.15 Q561.75 350.81 561.75 352.41 V628.0 Z" fill="#87a4f6"/>
<path d="M563.90 628.0 V527.68 Q563.90 526.08 565.50 526.08 H567.60 Q569.20 526.08 569.20 527.68 V628.0 Z" fill="#87a4f6"/>
<path d="M571.35 628.0 V377.30 Q571.35 375.70 572.95 375.70 H575.05 Q576.65 375.70 576.65 377.30 V628.0 Z" fill="#87a4f6"/>
<path d="M578.80 628.0 V474.20 Q578.80 472.60 580.40 472.60 H582.50 Q584.10 472.60 584.10 474.20 V628.0 Z" fill="#87a4f6"/>
<path d="M586.25 628.0 V571.10 Q586.25 569.50 587.85 569.50 H589.95 Q591.55 569.50 591.55 571.10 V628.0 Z" fill="#87a4f6"/>
<path d="M593.70 628.0 V564.21 Q593.70 562.61 595.30 562.61 H597.40 Q599.00 562.61 599.00 564.21 V628.0 Z" fill="#87a4f6"/>
<path d="M601.15 628.0 V512.85 Q601.15 511.25 602.75 511.25 H604.85 Q606.45 511.25 606.45 512.85 V628.0 Z" fill="#87a4f6"/>
<path d="M608.60 628.0 V504.91 Q608.60 503.31 610.20 503.31 H612.30 Q613.90 503.31 613.90 504.91 V628.0 Z" fill="#87a4f6"/>
<path d="M616.05 628.0 V527.68 Q616.05 526.08 617.65 526.08 H619.75 Q621.35 526.08 621.35 527.68 V628.0 Z" fill="#87a4f6"/>
<path d="M623.50 628.0 V527.15 Q623.50 525.55 625.10 525.55 H627.20 Q628.80 525.55 628.80 527.15 V628.0 Z" fill="#87a4f6"/>
<path d="M630.95 628.0 V526.62 Q630.95 525.02 632.55 525.02 H634.65 Q636.25 525.02 636.25 526.62 V628.0 Z" fill="#87a4f6"/>
<path d="M638.40 628.0 V574.27 Q638.40 572.67 640.00 572.67 H642.10 Q643.70 572.67 643.70 574.27 V628.0 Z" fill="#87a4f6"/>
<path d="M645.85 628.0 V550.45 Q645.85 548.85 647.45 548.85 H649.55 Q651.15 548.85 651.15 550.45 V628.0 Z" fill="#87a4f6"/>
<path d="M653.30 628.0 V491.67 Q653.30 490.07 654.90 490.07 H657.00 Q658.60 490.07 658.60 491.67 V628.0 Z" fill="#87a4f6"/>
<path d="M660.75 628.0 V522.91 Q660.75 521.31 662.35 521.31 H664.45 Q666.05 521.31 666.05 522.91 V628.0 Z" fill="#87a4f6"/>
<path d="M668.20 628.0 V516.03 Q668.20 514.43 669.80 514.43 H671.90 Q673.50 514.43 673.50 516.03 V628.0 Z" fill="#87a4f6"/>
<path d="M675.65 628.0 V534.03 Q675.65 532.43 677.25 532.43 H679.35 Q680.95 532.43 680.95 534.03 V628.0 Z" fill="#87a4f6"/>
<path d="M683.10 628.0 V527.68 Q683.10 526.08 684.70 526.08 H686.80 Q688.40 526.08 688.40 527.68 V628.0 Z" fill="#87a4f6"/>
<path d="M690.55 628.0 V410.13 Q690.55 408.53 692.15 408.53 H694.25 Q695.85 408.53 695.85 410.13 V628.0 Z" fill="#87a4f6"/>
<path d="M698.00 628.0 V577.98 Q698.00 576.38 699.60 576.38 H701.70 Q703.30 576.38 703.30 577.98 V628.0 Z" fill="#87a4f6"/>
<path d="M705.45 628.0 V525.56 Q705.45 523.96 707.05 523.96 H709.15 Q710.75 523.96 710.75 525.56 V628.0 Z" fill="#87a4f6"/>
<path d="M712.90 628.0 V380.48 Q712.90 378.88 714.50 378.88 H716.60 Q718.20 378.88 718.20 380.48 V628.0 Z" fill="#87a4f6"/>
<path d="M720.35 628.0 V538.80 Q720.35 537.20 721.95 537.20 H724.05 Q725.65 537.20 725.65 538.80 V628.0 Z" fill="#87a4f6"/>
<path d="M727.80 628.0 V520.26 Q727.80 518.66 729.40 518.66 H731.50 Q733.10 518.66 733.10 520.26 V628.0 Z" fill="#87a4f6"/>
<path d="M735.25 628.0 V477.90 Q735.25 476.30 736.85 476.30 H738.95 Q740.55 476.30 740.55 477.90 V628.0 Z" fill="#87a4f6"/>
<path d="M742.70 628.0 V522.38 Q742.70 520.78 744.30 520.78 H746.40 Q748.00 520.78 748.00 522.38 V628.0 Z" fill="#87a4f6"/>
<path d="M750.15 628.0 V528.21 Q750.15 526.61 751.75 526.61 H753.85 Q755.45 526.61 755.45 528.21 V628.0 Z" fill="#87a4f6"/>
<path d="M757.60 628.0 V414.89 Q757.60 413.29 759.20 413.29 H761.30 Q762.90 413.29 762.90 414.89 V628.0 Z" fill="#87a4f6"/>
<path d="M765.05 628.0 V543.03 Q765.05 541.43 766.65 541.43 H768.75 Q770.35 541.43 770.35 543.03 V628.0 Z" fill="#87a4f6"/>
<path d="M772.50 628.0 V446.66 Q772.50 445.06 774.10 445.06 H776.20 Q777.80 445.06 777.80 446.66 V628.0 Z" fill="#87a4f6"/>
<path d="M779.95 628.0 V492.20 Q779.95 490.60 781.55 490.60 H783.65 Q785.25 490.60 785.25 492.20 V628.0 Z" fill="#87a4f6"/>
<path d="M787.40 628.0 V581.16 Q787.40 579.56 789.00 579.56 H791.10 Q792.70 579.56 792.70 581.16 V628.0 Z" fill="#87a4f6"/>
<path d="M794.85 628.0 V594.39 Q794.85 592.79 796.45 592.79 H798.55 Q800.15 592.79 800.15 594.39 V628.0 Z" fill="#87a4f6"/>
<path d="M802.30 628.0 V423.37 Q802.30 421.77 803.90 421.77 H806.00 Q807.60 421.77 807.60 423.37 V628.0 Z" fill="#87a4f6"/>
<path d="M809.75 628.0 V527.15 Q809.75 525.55 811.35 525.55 H813.45 Q815.05 525.55 815.05 527.15 V628.0 Z" fill="#87a4f6"/>
<path d="M817.20 628.0 V518.15 Q817.20 516.55 818.80 516.55 H820.90 Q822.50 516.55 822.50 518.15 V628.0 Z" fill="#87a4f6"/>
<path d="M824.65 628.0 V579.04 Q824.65 577.44 826.25 577.44 H828.35 Q829.95 577.44 829.95 579.04 V628.0 Z" fill="#87a4f6"/>
<path d="M832.10 628.0 V523.97 Q832.10 522.37 833.70 522.37 H835.80 Q837.40 522.37 837.40 523.97 V628.0 Z" fill="#87a4f6"/>
<path d="M839.55 628.0 V587.51 Q839.55 585.91 841.15 585.91 H843.25 Q844.85 585.91 844.85 587.51 V628.0 Z" fill="#87a4f6"/>
<path d="M847.00 628.0 V485.85 Q847.00 484.25 848.60 484.25 H850.70 Q852.30 484.25 852.30 485.85 V628.0 Z" fill="#87a4f6"/>
<path d="M854.45 628.0 V538.27 Q854.45 536.67 856.05 536.67 H858.15 Q859.75 536.67 859.75 538.27 V628.0 Z" fill="#87a4f6"/>
<path d="M861.90 628.0 V481.08 Q861.90 479.48 863.50 479.48 H865.60 Q867.20 479.48 867.20 481.08 V628.0 Z" fill="#87a4f6"/>
<path d="M869.35 628.0 V459.37 Q869.35 457.77 870.95 457.77 H873.05 Q874.65 457.77 874.65 459.37 V628.0 Z" fill="#87a4f6"/>
<path d="M876.80 628.0 V492.73 Q876.80 491.13 878.40 491.13 H880.50 Q882.10 491.13 882.10 492.73 V628.0 Z" fill="#87a4f6"/>
<path d="M884.25 628.0 V527.68 Q884.25 526.08 885.85 526.08 H887.95 Q889.55 526.08 889.55 527.68 V628.0 Z" fill="#87a4f6"/>
<path d="M891.70 628.0 V487.96 Q891.70 486.36 893.30 486.36 H895.40 Q897.00 486.36 897.00 487.96 V628.0 Z" fill="#87a4f6"/>
<path d="M899.15 628.0 V526.62 Q899.15 525.02 900.75 525.02 H902.85 Q904.45 525.02 904.45 526.62 V628.0 Z" fill="#87a4f6"/>
<path d="M906.60 628.0 V521.85 Q906.60 520.25 908.20 520.25 H910.30 Q911.90 520.25 911.90 521.85 V628.0 Z" fill="#87a4f6"/>
<path d="M914.05 628.0 V537.21 Q914.05 535.61 915.65 535.61 H917.75 Q919.35 535.61 919.35 537.21 V628.0 Z" fill="#87a4f6"/>
<path d="M921.50 628.0 V534.03 Q921.50 532.43 923.10 532.43 H925.20 Q926.80 532.43 926.80 534.03 V628.0 Z" fill="#87a4f6"/>
<path d="M928.95 628.0 V525.03 Q928.95 523.43 930.55 523.43 H932.65 Q934.25 523.43 934.25 525.03 V628.0 Z" fill="#87a4f6"/>
<path d="M936.40 628.0 V402.19 Q936.40 400.59 938.00 400.59 H940.10 Q941.70 400.59 941.70 402.19 V628.0 Z" fill="#87a4f6"/>
<path d="M943.85 628.0 V495.91 Q943.85 494.31 945.45 494.31 H947.55 Q949.15 494.31 949.15 495.91 V628.0 Z" fill="#87a4f6"/>
<path d="M951.30 628.0 V492.73 Q951.30 491.13 952.90 491.13 H955.00 Q956.60 491.13 956.60 492.73 V628.0 Z" fill="#87a4f6"/>
<path d="M958.75 628.0 V530.85 Q958.75 529.25 960.35 529.25 H962.45 Q964.05 529.25 964.05 530.85 V628.0 Z" fill="#87a4f6"/>
<path d="M966.20 628.0 V455.66 Q966.20 454.06 967.80 454.06 H969.90 Q971.50 454.06 971.50 455.66 V628.0 Z" fill="#87a4f6"/>
<path d="M973.65 628.0 V547.27 Q973.65 545.67 975.25 545.67 H977.35 Q978.95 545.67 978.95 547.27 V628.0 Z" fill="#87a4f6"/>
<path d="M981.10 628.0 V539.86 Q981.10 538.26 982.70 538.26 H984.80 Q986.40 538.26 986.40 539.86 V628.0 Z" fill="#87a4f6"/>
<path d="M988.55 628.0 V535.62 Q988.55 534.02 990.15 534.02 H992.25 Q993.85 534.02 993.85 535.62 V628.0 Z" fill="#87a4f6"/>
<text transform="translate(238.00 535.2) scale(0.93 1)" text-anchor="middle" class="dl">167</text>
<text transform="translate(238.75 308.5) scale(0.93 1)" text-anchor="middle" class="dl">595</text>
<text transform="translate(246.20 577.0) scale(0.93 1)" text-anchor="middle" class="dl">88</text>
<text transform="translate(253.65 336.1) scale(0.93 1)" text-anchor="middle" class="dl">543</text>
<text transform="translate(261.10 361.5) scale(0.93 1)" text-anchor="middle" class="dl">495</text>
<text transform="translate(268.55 473.2) scale(0.93 1)" text-anchor="middle" class="dl">284</text>
<text transform="translate(283.45 522.5) scale(0.93 1)" text-anchor="middle" class="dl">191</text>
<text transform="translate(298.35 542.1) scale(0.93 1)" text-anchor="middle" class="dl">154</text>
<text transform="translate(305.80 429.8) scale(0.93 1)" text-anchor="middle" class="dl">366</text>
<text transform="translate(313.25 571.7) scale(0.93 1)" text-anchor="middle" class="dl">98</text>
<text transform="translate(320.70 389.0) scale(0.93 1)" text-anchor="middle" class="dl">443</text>
<text transform="translate(335.60 531.5) scale(0.93 1)" text-anchor="middle" class="dl">174</text>
<text transform="translate(343.05 569.1) scale(0.93 1)" text-anchor="middle" class="dl">103</text>
<text transform="translate(357.95 232.3) scale(0.93 1)" text-anchor="middle" class="dl">739</text>
<text transform="translate(365.40 525.1) scale(0.93 1)" text-anchor="middle" class="dl">186</text>
<text transform="translate(372.85 416.6) scale(0.93 1)" text-anchor="middle" class="dl">391</text>
<text transform="translate(380.30 581.2) scale(0.93 1)" text-anchor="middle" class="dl">80</text>
<text transform="translate(387.75 481.2) scale(0.93 1)" text-anchor="middle" class="dl">269</text>
<text transform="translate(402.65 573.8) scale(0.93 1)" text-anchor="middle" class="dl">94</text>
<text transform="translate(410.10 475.9) scale(0.93 1)" text-anchor="middle" class="dl">279</text>
<text transform="translate(432.45 526.7) scale(0.93 1)" text-anchor="middle" class="dl">183</text>
<text transform="translate(439.90 566.9) scale(0.93 1)" text-anchor="middle" class="dl">107</text>
<text transform="translate(454.80 521.4) scale(0.93 1)" text-anchor="middle" class="dl">193</text>
<text transform="translate(462.25 579.7) scale(0.93 1)" text-anchor="middle" class="dl">83</text>
<text transform="translate(477.15 478.5) scale(0.93 1)" text-anchor="middle" class="dl">274</text>
<text transform="translate(484.60 504.5) scale(0.93 1)" text-anchor="middle" class="dl">225</text>
<text transform="translate(492.05 420.8) scale(0.93 1)" text-anchor="middle" class="dl">383</text>
<text transform="translate(499.50 572.8) scale(0.93 1)" text-anchor="middle" class="dl">96</text>
<text transform="translate(506.95 445.7) scale(0.93 1)" text-anchor="middle" class="dl">336</text>
<text transform="translate(514.40 524.6) scale(0.93 1)" text-anchor="middle" class="dl">187</text>
<text transform="translate(521.85 425.6) scale(0.93 1)" text-anchor="middle" class="dl">374</text>
<text transform="translate(544.20 568.5) scale(0.93 1)" text-anchor="middle" class="dl">104</text>
<text transform="translate(551.65 433.5) scale(0.93 1)" text-anchor="middle" class="dl">359</text>
<text transform="translate(559.10 345.6) scale(0.93 1)" text-anchor="middle" class="dl">525</text>
<text transform="translate(566.55 520.9) scale(0.93 1)" text-anchor="middle" class="dl">194</text>
<text transform="translate(574.00 370.5) scale(0.93 1)" text-anchor="middle" class="dl">478</text>
<text transform="translate(581.45 467.4) scale(0.93 1)" text-anchor="middle" class="dl">295</text>
<text transform="translate(596.35 557.4) scale(0.93 1)" text-anchor="middle" class="dl">125</text>
<text transform="translate(611.25 498.1) scale(0.93 1)" text-anchor="middle" class="dl">237</text>
<text transform="translate(633.60 519.8) scale(0.93 1)" text-anchor="middle" class="dl">196</text>
<text transform="translate(641.05 567.5) scale(0.93 1)" text-anchor="middle" class="dl">106</text>
<text transform="translate(648.50 543.6) scale(0.93 1)" text-anchor="middle" class="dl">151</text>
<text transform="translate(655.95 484.9) scale(0.93 1)" text-anchor="middle" class="dl">262</text>
<text transform="translate(663.40 516.1) scale(0.93 1)" text-anchor="middle" class="dl">203</text>
<text transform="translate(685.75 520.9) scale(0.93 1)" text-anchor="middle" class="dl">194</text>
<text transform="translate(693.20 403.3) scale(0.93 1)" text-anchor="middle" class="dl">416</text>
<text transform="translate(700.65 571.2) scale(0.93 1)" text-anchor="middle" class="dl">99</text>
<text transform="translate(708.10 518.8) scale(0.93 1)" text-anchor="middle" class="dl">198</text>
<text transform="translate(715.55 373.7) scale(0.93 1)" text-anchor="middle" class="dl">472</text>
<text transform="translate(723.00 532.0) scale(0.93 1)" text-anchor="middle" class="dl">173</text>
<text transform="translate(730.45 513.5) scale(0.93 1)" text-anchor="middle" class="dl">208</text>
<text transform="translate(737.90 471.1) scale(0.93 1)" text-anchor="middle" class="dl">288</text>
<text transform="translate(752.80 521.4) scale(0.93 1)" text-anchor="middle" class="dl">193</text>
<text transform="translate(760.25 408.1) scale(0.93 1)" text-anchor="middle" class="dl">407</text>
<text transform="translate(767.70 536.2) scale(0.93 1)" text-anchor="middle" class="dl">165</text>
<text transform="translate(775.15 439.9) scale(0.93 1)" text-anchor="middle" class="dl">347</text>
<text transform="translate(782.60 485.4) scale(0.93 1)" text-anchor="middle" class="dl">261</text>
<text transform="translate(790.05 574.4) scale(0.93 1)" text-anchor="middle" class="dl">93</text>
<text transform="translate(797.50 587.6) scale(0.93 1)" text-anchor="middle" class="dl">68</text>
<text transform="translate(804.95 416.6) scale(0.93 1)" text-anchor="middle" class="dl">391</text>
<text transform="translate(812.40 520.3) scale(0.93 1)" text-anchor="middle" class="dl">195</text>
<text transform="translate(827.30 572.2) scale(0.93 1)" text-anchor="middle" class="dl">97</text>
<text transform="translate(834.75 517.2) scale(0.93 1)" text-anchor="middle" class="dl">201</text>
<text transform="translate(842.20 580.7) scale(0.93 1)" text-anchor="middle" class="dl">81</text>
<text transform="translate(857.10 531.5) scale(0.93 1)" text-anchor="middle" class="dl">174</text>
<text transform="translate(864.55 474.3) scale(0.93 1)" text-anchor="middle" class="dl">282</text>
<text transform="translate(872.00 452.6) scale(0.93 1)" text-anchor="middle" class="dl">323</text>
<text transform="translate(886.90 520.9) scale(0.93 1)" text-anchor="middle" class="dl">194</text>
<text transform="translate(894.35 481.2) scale(0.93 1)" text-anchor="middle" class="dl">269</text>
<text transform="translate(909.25 515.1) scale(0.93 1)" text-anchor="middle" class="dl">205</text>
<text transform="translate(931.60 518.2) scale(0.93 1)" text-anchor="middle" class="dl">199</text>
<text transform="translate(939.05 395.4) scale(0.93 1)" text-anchor="middle" class="dl">431</text>
<text transform="translate(953.95 485.9) scale(0.93 1)" text-anchor="middle" class="dl">260</text>
<text transform="translate(961.40 524.1) scale(0.93 1)" text-anchor="middle" class="dl">188</text>
<text transform="translate(968.85 448.9) scale(0.93 1)" text-anchor="middle" class="dl">330</text>
<text transform="translate(983.00 528.8) scale(0.93 1)" text-anchor="middle" class="dl">179</text>
<text x="231.30" y="646.8" text-anchor="middle" class="xl">七</text>
<text x="231.30" y="660.5" text-anchor="middle" class="xl">台</text>
<text x="231.30" y="674.2" text-anchor="middle" class="xl">河</text>
<text x="231.30" y="687.9" text-anchor="middle" class="xl">市</text>
<text x="246.18" y="646.8" text-anchor="middle" class="xl">东</text>
<text x="246.18" y="660.5" text-anchor="middle" class="xl">区</text>
<text x="261.05" y="646.8" text-anchor="middle" class="xl">中</text>
<text x="261.05" y="660.5" text-anchor="middle" class="xl">山</text>
<text x="261.05" y="674.2" text-anchor="middle" class="xl">市</text>
<text x="275.93" y="646.8" text-anchor="middle" class="xl">九</text>
<text x="275.93" y="660.5" text-anchor="middle" class="xl">江</text>
<text x="275.93" y="674.2" text-anchor="middle" class="xl">市</text>
<text x="290.80" y="646.8" text-anchor="middle" class="xl">佳</text>
<text x="290.80" y="660.5" text-anchor="middle" class="xl">木</text>
<text x="290.80" y="674.2" text-anchor="middle" class="xl">斯</text>
<text x="290.80" y="687.9" text-anchor="middle" class="xl">市</text>
<text x="305.68" y="646.8" text-anchor="middle" class="xl">信</text>
<text x="305.68" y="660.5" text-anchor="middle" class="xl">阳</text>
<text x="305.68" y="674.2" text-anchor="middle" class="xl">市</text>
<text x="320.56" y="646.8" text-anchor="middle" class="xl">区</text>
<text x="335.43" y="646.8" text-anchor="middle" class="xl">南</text>
<text x="335.43" y="660.5" text-anchor="middle" class="xl">平</text>
<text x="335.43" y="674.2" text-anchor="middle" class="xl">市</text>
<text x="350.31" y="646.8" text-anchor="middle" class="xl">南</text>
<text x="350.31" y="660.5" text-anchor="middle" class="xl">昌</text>
<text x="350.31" y="674.2" text-anchor="middle" class="xl">市</text>
<text x="365.18" y="646.8" text-anchor="middle" class="xl">双</text>
<text x="365.18" y="660.5" text-anchor="middle" class="xl">鸭</text>
<text x="365.18" y="674.2" text-anchor="middle" class="xl">山</text>
<text x="365.18" y="687.9" text-anchor="middle" class="xl">市</text>
<text x="380.06" y="646.8" text-anchor="middle" class="xl">和</text>
<text x="380.06" y="660.5" text-anchor="middle" class="xl">田</text>
<text x="380.06" y="674.2" text-anchor="middle" class="xl">地</text>
<text x="380.06" y="687.9" text-anchor="middle" class="xl">区</text>
<text x="394.94" y="646.8" text-anchor="middle" class="xl">喀</text>
<text x="394.94" y="660.5" text-anchor="middle" class="xl">什</text>
<text x="394.94" y="674.2" text-anchor="middle" class="xl">地</text>
<text x="394.94" y="687.9" text-anchor="middle" class="xl">区</text>
<text x="409.81" y="646.8" text-anchor="middle" class="xl">嘉</text>
<text x="409.81" y="660.5" text-anchor="middle" class="xl">峪</text>
<text x="409.81" y="674.2" text-anchor="middle" class="xl">关</text>
<text x="409.81" y="687.9" text-anchor="middle" class="xl">市</text>
<text x="424.69" y="646.8" text-anchor="middle" class="xl">大</text>
<text x="424.69" y="660.5" text-anchor="middle" class="xl">庆</text>
<text x="424.69" y="674.2" text-anchor="middle" class="xl">市</text>
<text x="439.56" y="646.8" text-anchor="middle" class="xl">威</text>
<text x="439.56" y="660.5" text-anchor="middle" class="xl">海</text>
<text x="439.56" y="674.2" text-anchor="middle" class="xl">市</text>
<text x="454.44" y="646.8" text-anchor="middle" class="xl">安</text>
<text x="454.44" y="660.5" text-anchor="middle" class="xl">庆</text>
<text x="454.44" y="674.2" text-anchor="middle" class="xl">市</text>
<text x="469.32" y="646.8" text-anchor="middle" class="xl">宿</text>
<text x="469.32" y="660.5" text-anchor="middle" class="xl">迁</text>
<text x="469.32" y="674.2" text-anchor="middle" class="xl">市</text>
<text x="484.19" y="646.8" text-anchor="middle" class="xl">巴</text>
<text x="484.19" y="660.5" text-anchor="middle" class="xl">彦</text>
<text x="484.19" y="674.2" text-anchor="middle" class="xl">淖</text>
<text x="484.19" y="687.9" text-anchor="middle" class="xl">尔</text>
<text x="484.19" y="701.6" text-anchor="middle" class="xl">市</text>
<text x="499.07" y="646.8" text-anchor="middle" class="xl">平</text>
<text x="499.07" y="660.5" text-anchor="middle" class="xl">凉</text>
<text x="499.07" y="674.2" text-anchor="middle" class="xl">市</text>
<text x="513.94" y="646.8" text-anchor="middle" class="xl">廊</text>
<text x="513.94" y="660.5" text-anchor="middle" class="xl">坊</text>
<text x="513.94" y="674.2" text-anchor="middle" class="xl">市</text>
<text x="528.82" y="646.8" text-anchor="middle" class="xl">张</text>
<text x="528.82" y="660.5" text-anchor="middle" class="xl">家</text>
<text x="528.82" y="674.2" text-anchor="middle" class="xl">口</text>
<text x="528.82" y="687.9" text-anchor="middle" class="xl">市</text>
<text x="543.70" y="646.8" text-anchor="middle" class="xl">彰</text>
<text x="543.70" y="660.5" text-anchor="middle" class="xl">化</text>
<text x="543.70" y="674.2" text-anchor="middle" class="xl">县</text>
<text x="558.57" y="646.8" text-anchor="middle" class="xl">成</text>
<text x="558.57" y="660.5" text-anchor="middle" class="xl">都</text>
<text x="558.57" y="674.2" text-anchor="middle" class="xl">市</text>
<text x="573.45" y="646.8" text-anchor="middle" class="xl">揭</text>
<text x="573.45" y="660.5" text-anchor="middle" class="xl">阳</text>
<text x="573.45" y="674.2" text-anchor="middle" class="xl">市</text>
<text x="588.32" y="646.8" text-anchor="middle" class="xl">新</text>
<text x="588.32" y="660.5" text-anchor="middle" class="xl">竹</text>
<text x="588.32" y="674.2" text-anchor="middle" class="xl">市</text>
<text x="603.20" y="646.8" text-anchor="middle" class="xl">晋</text>
<text x="603.20" y="660.5" text-anchor="middle" class="xl">城</text>
<text x="603.20" y="674.2" text-anchor="middle" class="xl">市</text>
<text x="618.08" y="646.8" text-anchor="middle" class="xl">朝</text>
<text x="618.08" y="660.5" text-anchor="middle" class="xl">阳</text>
<text x="618.08" y="674.2" text-anchor="middle" class="xl">市</text>
<text x="632.95" y="646.8" text-anchor="middle" class="xl">沧</text>
<text x="632.95" y="660.5" text-anchor="middle" class="xl">州</text>
<text x="632.95" y="674.2" text-anchor="middle" class="xl">市</text>
<text x="647.83" y="646.8" text-anchor="middle" class="xl">泰</text>
<text x="647.83" y="660.5" text-anchor="middle" class="xl">州</text>
<text x="647.83" y="674.2" text-anchor="middle" class="xl">市</text>
<text x="662.70" y="646.8" text-anchor="middle" class="xl">济</text>
<text x="662.70" y="660.5" text-anchor="middle" class="xl">宁</text>
<text x="662.70" y="674.2" text-anchor="middle" class="xl">市</text>
<text x="677.58" y="646.8" text-anchor="middle" class="xl">淮</text>
<text x="677.58" y="660.5" text-anchor="middle" class="xl">南</text>
<text x="677.58" y="674.2" text-anchor="middle" class="xl">市</text>
<text x="692.46" y="646.8" text-anchor="middle" class="xl">清</text>
<text x="692.46" y="660.5" text-anchor="middle" class="xl">远</text>
<text x="692.46" y="674.2" text-anchor="middle" class="xl">市</text>
<text x="707.33" y="646.8" text-anchor="middle" class="xl">滁</text>
<text x="707.33" y="660.5" text-anchor="middle" class="xl">州</text>
<text x="707.33" y="674.2" text-anchor="middle" class="xl">市</text>
<text x="722.21" y="646.8" text-anchor="middle" class="xl">澳</text>
<text x="722.21" y="660.5" text-anchor="middle" class="xl">门</text>
<text x="722.21" y="674.2" text-anchor="middle" class="xl">半</text>
<text x="722.21" y="687.9" text-anchor="middle" class="xl">岛</text>
<text x="737.08" y="646.8" text-anchor="middle" class="xl">白</text>
<text x="737.08" y="660.5" text-anchor="middle" class="xl">银</text>
<text x="737.08" y="674.2" text-anchor="middle" class="xl">市</text>
<text x="751.96" y="646.8" text-anchor="middle" class="xl">盘</text>
<text x="751.96" y="660.5" text-anchor="middle" class="xl">锦</text>
<text x="751.96" y="674.2" text-anchor="middle" class="xl">市</text>
<text x="766.84" y="646.8" text-anchor="middle" class="xl">绥</text>
<text x="766.84" y="660.5" text-anchor="middle" class="xl">化</text>
<text x="766.84" y="674.2" text-anchor="middle" class="xl">市</text>
<text x="781.71" y="646.8" text-anchor="middle" class="xl">自</text>
<text x="781.71" y="660.5" text-anchor="middle" class="xl">贡</text>
<text x="781.71" y="674.2" text-anchor="middle" class="xl">市</text>
<text x="796.59" y="646.8" text-anchor="middle" class="xl">荃</text>
<text x="796.59" y="660.5" text-anchor="middle" class="xl">湾</text>
<text x="796.59" y="674.2" text-anchor="middle" class="xl">区</text>
<text x="811.46" y="646.8" text-anchor="middle" class="xl">萍</text>
<text x="811.46" y="660.5" text-anchor="middle" class="xl">乡</text>
<text x="811.46" y="674.2" text-anchor="middle" class="xl">市</text>
<text x="826.34" y="646.8" text-anchor="middle" class="xl">葵</text>
<text x="826.34" y="660.5" text-anchor="middle" class="xl">青</text>
<text x="826.34" y="674.2" text-anchor="middle" class="xl">区</text>
<text x="841.22" y="646.8" text-anchor="middle" class="xl">衡</text>
<text x="841.22" y="660.5" text-anchor="middle" class="xl">水</text>
<text x="841.22" y="674.2" text-anchor="middle" class="xl">市</text>
<text x="856.09" y="646.8" text-anchor="middle" class="xl">辽</text>
<text x="856.09" y="660.5" text-anchor="middle" class="xl">阳</text>
<text x="856.09" y="674.2" text-anchor="middle" class="xl">市</text>
<text x="870.97" y="646.8" text-anchor="middle" class="xl">郑</text>
<text x="870.97" y="660.5" text-anchor="middle" class="xl">州</text>
<text x="870.97" y="674.2" text-anchor="middle" class="xl">市</text>
<text x="885.84" y="646.8" text-anchor="middle" class="xl">铁</text>
<text x="885.84" y="660.5" text-anchor="middle" class="xl">岭</text>
<text x="885.84" y="674.2" text-anchor="middle" class="xl">市</text>
<text x="900.72" y="646.8" text-anchor="middle" class="xl">铜</text>
<text x="900.72" y="660.5" text-anchor="middle" class="xl">陵</text>
<text x="900.72" y="674.2" text-anchor="middle" class="xl">市</text>
<text x="915.60" y="646.8" text-anchor="middle" class="xl">长</text>
<text x="915.60" y="660.5" text-anchor="middle" class="xl">春</text>
<text x="915.60" y="674.2" text-anchor="middle" class="xl">市</text>
<text x="930.47" y="646.8" text-anchor="middle" class="xl">阜</text>
<text x="930.47" y="660.5" text-anchor="middle" class="xl">阳</text>
<text x="930.47" y="674.2" text-anchor="middle" class="xl">市</text>
<text x="945.35" y="646.8" text-anchor="middle" class="xl">阳</text>
<text x="945.35" y="660.5" text-anchor="middle" class="xl">泉</text>
<text x="945.35" y="674.2" text-anchor="middle" class="xl">市</text>
<text x="960.22" y="646.8" text-anchor="middle" class="xl">马</text>
<text x="960.22" y="660.5" text-anchor="middle" class="xl">鞍</text>
<text x="960.22" y="674.2" text-anchor="middle" class="xl">山</text>
<text x="960.22" y="687.9" text-anchor="middle" class="xl">市</text>
<text x="975.10" y="646.8" text-anchor="middle" class="xl">黄</text>
<text x="975.10" y="660.5" text-anchor="middle" class="xl">山</text>
<text x="975.10" y="674.2" text-anchor="middle" class="xl">市</text>
<text x="989.98" y="646.8" text-anchor="middle" class="xl">龙</text>
<text x="989.98" y="660.5" text-anchor="middle" class="xl">岩</text>
<text x="989.98" y="674.2" text-anchor="middle" class="xl">市</text>
    <text x="197" y="184.5" style="font-size:14px;font-weight:bold;fill:#0c0c30">第一层</text>
    <text x="1006.5" y="475" style="font-size:14px;fill:#1d2452">指标名称</text>
    <rect x="1007" y="485.3" width="13.6" height="13.6" fill="#87a4f6"/>
    <text x="1025" y="498.5" style="font-size:14px;fill:#1d2452">浏览量</text>
    <rect x="187.4" y="158.5" width="895.3" height="611.5" fill="none" stroke="#4cc2cf" stroke-width="1.5"/>
    <g fill="#fff" stroke="#4cc2cf" stroke-width="1.5">
      <circle cx="187.7" cy="158.5" r="3.6"/><circle cx="635.2" cy="158.5" r="3.6"/><circle cx="1082.7" cy="158.5" r="3.6"/>
      <circle cx="187.7" cy="464.2" r="3.6"/><circle cx="1082.7" cy="464.2" r="3.6"/>
      <circle cx="187.7" cy="770" r="3.6"/><circle cx="635.2" cy="770" r="3.6"/><circle cx="1082.7" cy="770" r="3.6"/>
    </g>
  </svg>

  <!-- popup -->
  <div class="abs" style="left:955px;top:111px;width:127px;height:45px;background:#fff;border-radius:4px;box-shadow:0 3px 14px rgba(20,30,60,0.08)"></div>
  <svg class="abs" style="left:969px;top:124px" width="16" height="16" viewBox="0 0 16 16"><path d="M1 15l1.2-4.2L10.5 2.5l3 3L5.2 13.8z" fill="#1a1f4d"/><path d="M11.5 1.5l3 3" stroke="#1a1f4d" stroke-width="1.6"/><path d="M8 10.8h7M9.5 13.8h5.5" stroke="#1a1f4d" stroke-width="1.4"/></svg>
  <svg class="abs" style="left:1005px;top:124px" width="16" height="16" viewBox="0 0 16 16"><rect x="1.8" y="1.8" width="12.4" height="12.4" fill="#a9abbf" stroke="#1a1f4d" stroke-width="1.7"/><path d="M5.2 10.8l5.6-5.6M8.3 5.1h2.6v2.6M5.1 8.3v2.6h2.6" fill="none" stroke="#1a1f4d" stroke-width="1"/></svg>
  <div class="sep" style="left:1036px;top:120px;height:27px;background:#e8e9ee"></div>
  <svg class="abs" style="left:1057px;top:125px" width="4" height="15" viewBox="0 0 4 15"><rect x="0.6" y="0.6" width="2.6" height="2.6" fill="#1a1f4d"/><rect x="0.6" y="6.1" width="2.6" height="2.6" fill="#1a1f4d"/><rect x="0.6" y="11.9" width="2.6" height="2.6" fill="#1a1f4d"/></svg>

  <!-- scrollbars -->
  <div class="abs" style="left:1170px;top:136px;width:6px;height:728px;background:#f0f0f2"></div>
  <div class="abs" style="left:1170px;top:136px;width:6px;height:721px;background:#e4e5e8;border-radius:3px"></div>
  <div class="abs" style="left:1170px;top:136px;width:6px;height:476px;background:#d0d0d3;border-radius:3px"></div>
  <div class="abs" style="left:76px;top:858px;width:1094px;height:6px;background:#e6e7ea;border-radius:0 3px 3px 0"></div>
  <div class="abs" style="left:281px;top:858px;width:629px;height:6px;background:#cfd0d3;border-radius:3px"></div>

  <!-- bottom bar -->
  <div class="abs" style="left:53px;top:864px;width:1122px;height:45px;background:#fff;border-top:1px solid #eceef2"></div>
  <div class="btn" style="left:67px;top:874px;width:98px;height:27px"></div>
  <svg class="abs" style="left:78px;top:876px" width="24" height="22" viewBox="0 0 24 22"><path d="M5.2 5.4H9.3V16.6H5.2M18.6 5.4H14.7V16.6H18.6" fill="none" stroke="#555" stroke-width="1.35"/><path d="M12 4.3V17.7" stroke="#666" stroke-width="1.5" stroke-dasharray="2.2 1.5"/></svg>
  <div class="abs" style="left:104px;top:879px;font-size:14px;color:#333;line-height:16px">分页1/1</div>
  <div class="btn" style="left:170px;top:874px;width:78px;height:27px"></div>
  <svg class="abs" style="left:185px;top:879px" width="16" height="16" viewBox="0 0 16 16"><path d="M8 1L15 4.5L8 8L1 4.5z" fill="none" stroke="#333" stroke-width="1.4" stroke-linejoin="round"/><path d="M1 8l7 3.5L15 8M1 11.2l7 3.5l7-3.5" fill="none" stroke="#333" stroke-width="1.4" stroke-linejoin="round"/></svg>
  <div class="abs" style="left:207px;top:879px;font-size:14px;color:#333;line-height:16px">图层</div>

  <svg class="abs" style="left:698px;top:876px" width="24" height="22" viewBox="0 0 24 22"><rect x="5.3" y="7.7" width="13.8" height="8.9" fill="#efefef" stroke="#555" stroke-width="1.3"/><g fill="#444"><circle cx="8.2" cy="10.5" r="0.8"/><circle cx="10.5" cy="10.5" r="0.8"/><circle cx="13.3" cy="10.5" r="0.8"/><circle cx="15.7" cy="10.5" r="0.8"/><circle cx="8.2" cy="13.4" r="0.8"/><circle cx="15.7" cy="13.4" r="0.8"/></g><path d="M10.6 13.4H13.6" stroke="#444" stroke-width="1.5" stroke-linecap="round"/></svg>
  <div class="sep" style="left:741px;top:880px;height:13px"></div>
  <div class="abs" style="left:759px;top:878.5px;font-size:13.5px;color:#222;line-height:16px">画布尺寸：<span style="letter-spacing:-0.05px;margin-left:2.7px">1920×1080px</span></div>
  <svg class="abs" style="left:914px;top:879px" width="16" height="15" viewBox="0 0 16 15"><path d="M1 14l1-3.6L9.5 3l2.6 2.6L4.6 13z" fill="#555"/><path d="M10.5 2l2.6 2.6" stroke="#555" stroke-width="1.5"/><path d="M8 10.5h7M9.5 13.5h5.5" stroke="#555" stroke-width="1.3"/></svg>
  <div class="sep" style="left:948px;top:880px;height:13px"></div>
  <svg class="abs" style="left:967.5px;top:879px" width="17" height="17" viewBox="0 0 17 17"><circle cx="7" cy="7" r="5.8" fill="none" stroke="#444" stroke-width="1.5"/><path d="M4.2 7h5.6M11.2 11.2L15 15" stroke="#444" stroke-width="1.5"/></svg>
  <div class="abs" style="left:988px;top:874px;width:90px;height:27px;border:1px solid #dcdfe6;border-radius:3px;background:#fff"></div>
  <div class="abs" style="left:999px;top:879.5px;font-size:13.5px;color:#222;line-height:16px">88%</div>
  <svg class="abs" style="left:1049px;top:882px" width="16" height="10" viewBox="0 0 16 10"><path d="M1 1l7 7.5L15 1" fill="none" stroke="#555" stroke-width="1.3"/></svg>
  <svg class="abs" style="left:1084px;top:879px" width="17" height="17" viewBox="0 0 17 17"><circle cx="7" cy="7" r="5.8" fill="none" stroke="#444" stroke-width="1.5"/><path d="M4.2 7h5.6M7 4.2v5.6M11.2 11.2L15 15" stroke="#444" stroke-width="1.5"/></svg>
  <div class="sep" style="left:1118px;top:880px;height:13px"></div>
  <svg class="abs" style="left:1136px;top:874px" width="26" height="26" viewBox="0 0 26 26"><rect x="6.7" y="6.7" width="12.6" height="12.6" fill="#bdbdbd" stroke="#555" stroke-width="1.1"/><rect x="9.6" y="9.6" width="6.8" height="6.8" fill="#fff"/><path d="M9.4 11.7V9.4H11.7M14.3 9.4H16.6V11.7M16.6 14.3V16.6H14.3M11.7 16.6H9.4V14.3" fill="none" stroke="#444" stroke-width="1.1"/></svg>

  <!-- right panel -->
  <div class="abs" style="left:1175px;top:115px;width:316px;height:794px;background:#fff;border-left:1px solid #e4e6ee"></div>
  <div class="abs" style="left:1176px;top:115px;width:315px;height:42px;background:#f5f7fa;border-bottom:1px solid #e8eaef"></div>
  <div class="abs" style="left:1254px;top:115px;width:79px;height:42px;background:#fff"></div>
  <div class="sep" style="left:1254px;top:115px;height:42px;background:#e8eaef"></div>
  <div class="sep" style="left:1333px;top:115px;height:42px;background:#e8eaef"></div>
  <div class="sep" style="left:1411px;top:115px;height:42px;background:#e8eaef"></div>
  <div class="tab" style="left:1176px">内容</div>
  <div class="tab" style="left:1254px;color:#13a7b9">交互</div>
  <div class="tab" style="left:1333px">动画</div>
  <div class="tab" style="left:1411px">组件</div>
  <div class="pink" style="left:1252px;top:112px;width:79px;height:41px"></div>

  <div class="abs" style="left:1234px;top:174px;font-size:14px;color:#13a7b9;line-height:18px;font-weight:bold">交互属性</div>
  <div class="abs" style="left:1378px;top:174px;font-size:14px;color:#333;line-height:18px">交互事件</div>
  <div class="abs" style="left:1190px;top:207.5px;width:286px;height:1px;background:#e8eaef"></div>
  <div class="abs" style="left:1190px;top:206px;width:143px;height:2px;background:#13a7b9"></div>
  <div class="pink" style="left:1203px;top:160px;width:128px;height:47px"></div>
  <div class="badge" style="left:1140px;top:168px">2</div>

  <div class="abs" style="left:1190px;top:224px;font-size:14px;color:#333;line-height:16px">联动</div>
  <div class="abs" style="left:1298px;top:225px;width:18px;height:18px;background:#13a7b9;border-radius:2px"></div>
  <svg class="abs" style="left:1298px;top:225px" width="18" height="18" viewBox="0 0 18 18"><path d="M4.3 9.2l3.2 3.2l6.2-6.4" fill="none" stroke="#fff" stroke-width="2"/></svg>
  <div class="abs" style="left:1325px;top:225px;font-size:14px;color:#333;line-height:16px">开启自动联动</div>
  <div class="btn" style="left:1298px;top:254px;width:178px;height:27px;line-height:25px">设置联动对象</div>
  <div class="abs" style="left:1190px;top:296px;font-size:14px;color:#333;line-height:16px">钻取</div>
  <div class="btn" style="left:1298px;top:293px;width:180px;height:32px;line-height:30px">设置钻取层级</div>
  <div class="pink" style="left:1298px;top:293px;width:180px;height:32px"></div>
  <div class="badge" style="left:1243px;top:293px">3</div>
  <div class="abs" style="left:53px;top:908px;width:1430px;height:1px;background:#e6eaf3"></div>
</div>
</body>
</html>
